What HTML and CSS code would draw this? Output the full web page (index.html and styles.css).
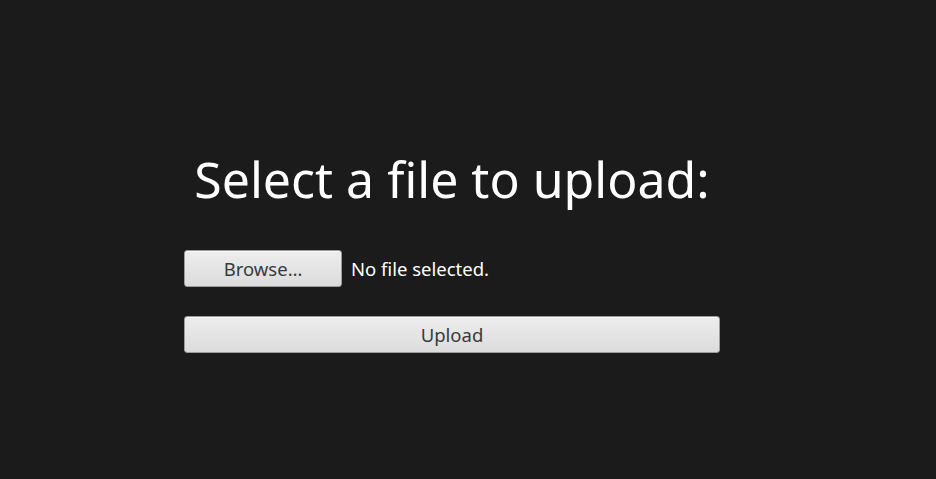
FILE: index.html
```html
<!DOCTYPE html>
<html>
<head>
<meta charset="utf-8">
<title>Upload</title>
<link rel="stylesheet" href="styles.css">
</head>
<body>
<main class="page">
  <form class="upload-form">
    <h1 class="title">Select a file to upload:</h1>
    <div class="file-row">
      <button type="button" class="btn btn-browse">Browse…</button>
      <span class="file-status">No file selected.</span>
    </div>
    <button type="button" class="btn btn-upload">Upload</button>
  </form>
</main>
</body>
</html>
```
FILE: styles.css
```css
html, body {
  margin: 0;
  padding: 0;
  height: 100%;
  background: #1b1b1b;
}
body {
  font-family: "Noto Sans", "Open Sans", sans-serif;
  color: #ffffff;
}
.page {
  display: flex;
  justify-content: center;
  padding-top: 147px;
  padding-right: 32px;
}
.upload-form {
  width: 536px;
  display: flex;
  flex-direction: column;
}
.title {
  margin: 0;
  font-weight: 400;
  font-size: 50px;
  line-height: 64px;
  text-align: center;
}
.file-row {
  display: flex;
  align-items: center;
  gap: 9px;
  margin-top: 39px;
}
.btn {
  font-family: inherit;
  font-size: 18.5px;
  color: #3a3a3a;
  background: linear-gradient(#ededed, #dcdcdc);
  border: 1px solid #9c9c9c;
  border-radius: 3px;
  box-shadow: inset 0 1px 0 #f8f8f8;
  padding: 0;
  cursor: pointer;
}
.btn-browse {
  width: 158px;
  height: 37px;
}
.file-status {
  font-size: 18.5px;
  color: #ffffff;
}
.btn-upload {
  margin-top: 29px;
  width: 536px;
  height: 37px;
}
```
